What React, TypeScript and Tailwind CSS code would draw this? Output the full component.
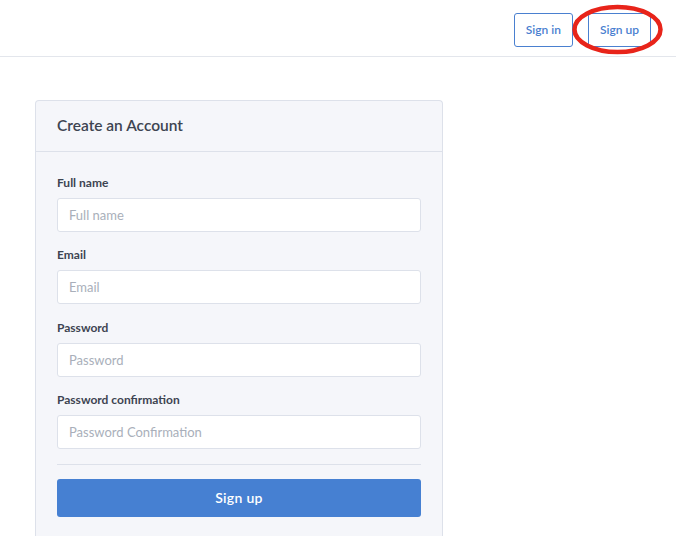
import React from "react";

const fields = [
  { label: "Full name", placeholder: "Full name", type: "text" },
  { label: "Email", placeholder: "Email", type: "email" },
  { label: "Password", placeholder: "Password", type: "password" },
  { label: "Password confirmation", placeholder: "Password Confirmation", type: "password" },
];

export default function App() {
  return (
    <div className="min-h-[536px] bg-white font-['Lato','Open_Sans',sans-serif] text-[#3d4451]">
      {/* Top bar */}
      <header className="flex h-[57px] items-start justify-end border-b border-[#e3e6ec] pt-[13px] pr-[25px]">
        <div className="flex items-center gap-[15px]">
          <button className="h-[34px] rounded-[3px] border border-[#4a80d0] px-[11px] text-[12px] font-semibold text-[#4a80d0]">
            Sign in
          </button>
          <div className="relative">
            <button className="h-[34px] rounded-[3px] border border-[#4a80d0] px-[11px] text-[12px] font-semibold text-[#4a80d0]">
              Sign up
            </button>
            <svg
              className="pointer-events-none absolute left-[-16px] top-[-9px]"
              width="92"
              height="52"
              viewBox="0 0 92 52"
            >
              <ellipse cx="45.5" cy="25.5" rx="43" ry="22.5" fill="none" stroke="#e8241a" strokeWidth="4.5" />
            </svg>
          </div>
        </div>
      </header>

      <main className="px-[35px] pt-[43px]">
        <div className="w-[408px] rounded-t-[4px] border border-b-0 border-[#dde1ea] bg-[#f5f6fa]">
          <div className="flex h-[51px] items-center border-b border-[#dde1ea] px-[21px]">
            <h1 className="text-[15.5px] font-semibold text-[#3d4451]">Create an Account</h1>
          </div>
          <form className="px-[21px] pt-[22px] pb-[20px]">
            {fields.map((f) => (
              <div key={f.label} className="mb-[14.4px] flex flex-col last:mb-[16px]">
                <label className="mb-[6px] text-[12px] font-bold leading-[18px] text-[#3d4451]">{f.label}</label>
                <input
                  type={f.type}
                  placeholder={f.placeholder}
                  className="h-[34px] w-[364px] rounded-[3px] border border-[#dde1ea] bg-white px-[11px] text-[13px] text-[#3d4451] outline-none placeholder:text-[#a9afba]"
                />
              </div>
            ))}
            <div className="border-t border-[#dde1ea] pt-[14px]">
              <button
                type="button"
                className="h-[38px] w-[364px] rounded-[3px] bg-[#4680d2] text-[14px] font-semibold tracking-[0.3px] text-white"
              >
                Sign up
              </button>
            </div>
          </form>
        </div>
      </main>
    </div>
  );
}
